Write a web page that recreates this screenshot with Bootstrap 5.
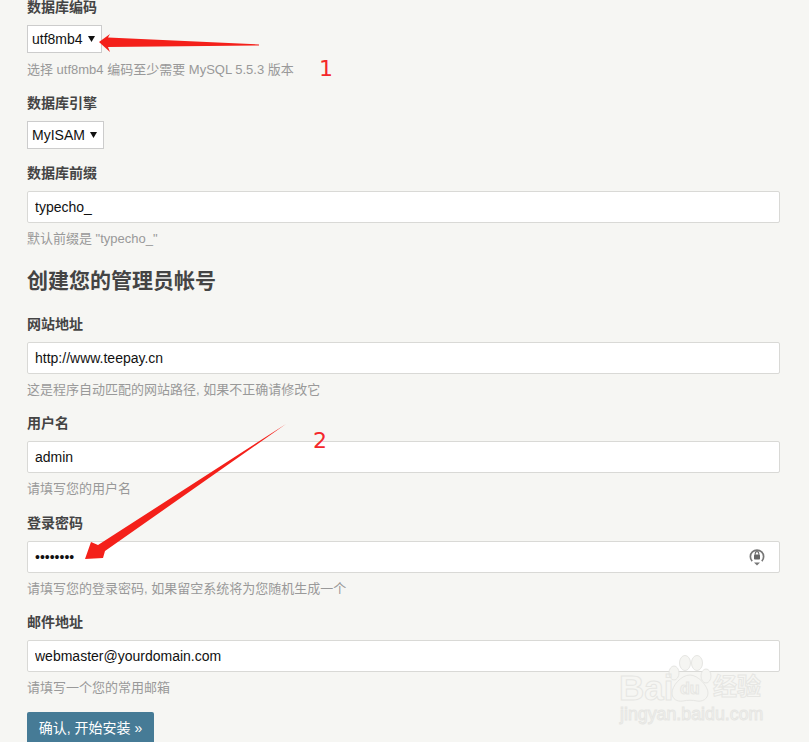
<!DOCTYPE html>
<html lang="zh-CN">
<head>
<meta charset="utf-8">
<title>Typecho 安装</title>
<link href="https://cdn.jsdelivr.net/npm/bootstrap@5.3.0/dist/css/bootstrap.min.css" rel="stylesheet">
<style>
html,body{height:742px;overflow:hidden}
body{background:#f6f6f3;color:#444;font-family:"Liberation Sans","Noto Sans CJK SC",sans-serif;font-size:14px;position:relative}
.install-form{padding:0 29px 0 27px;width:809px}
.fld{margin-bottom:14px}
.fld-nohint{margin-bottom:15px}
.fld-roomy{margin-bottom:15px}
.fld-label{display:block;font-weight:700;font-size:14px;line-height:18px;margin-bottom:9px;color:#444}
.fld-first .fld-label{line-height:15px;margin-bottom:10px}
.fld-hint{font-size:13px;line-height:20px;color:#999;margin:6px 0 0}
.fld-hint-sel{margin-top:7px}
.fld-input.form-control{height:32px;padding:0 7px;font-size:14px;line-height:30px;color:#111;border:1px solid #d9d9d6;border-radius:2px;background:#fff;box-shadow:none}
.fld-select.form-select{display:block;height:28px;padding:0 17px 0 4px;font-size:14px;line-height:26px;color:#111;border:1px solid #ccc;border-radius:0;background-color:#fff;background-position:right 6px center;background-size:7px 6px;--bs-form-select-bg-img:url("data:image/svg+xml,%3csvg xmlns='http://www.w3.org/2000/svg' viewBox='0 0 7 6'%3e%3cpath d='M0 0h7L3.500 6z' fill='%23111'/%3e%3c/svg%3e")}
.sel-a.form-select{width:75px}
.sel-b.form-select{width:77px}
.sec-title{font-size:21px;font-weight:700;line-height:30px;color:#444;margin:17px 0 19px}
.go-btn.btn{display:block;background:#467b96;border:0;border-radius:2px;color:#fff;font-size:14px;line-height:20px;padding:6px 0;width:127px;height:32px}
.pw-wrap{position:relative}
.pw-ico{position:absolute;right:15px;top:7px;width:16px;height:18px}
.overlay-art{position:absolute;left:0;top:0;width:809px;height:742px;pointer-events:none}
.mark-num{position:absolute;color:#f4272a;font-family:"DejaVu Sans",sans-serif;font-size:22px;line-height:24px}
.num-one{left:319px;top:57px}
.num-two{left:313px;top:429px}
.wm{position:absolute;color:transparent;-webkit-text-stroke:1px #e6e6e3;font-family:"Liberation Sans","Noto Sans CJK SC",sans-serif;white-space:nowrap;line-height:1}
.wm-bai{left:619px;top:670px;font-size:35px;font-weight:700}
.wm-du{left:680px;top:681px;font-size:16px;font-weight:700}
.wm-jy{left:713px;top:675px;font-size:24px;font-weight:700}
.wm-url{left:620px;top:706px;font-size:17.800px}
</style>
</head>
<body>
<form class="install-form">
  <div class="fld fld-first">
    <label class="fld-label">数据库编码</label>
    <select class="form-select fld-select sel-a"><option>utf8mb4</option></select>
    <p class="fld-hint fld-hint-sel">选择 utf8mb4 编码至少需要 MySQL 5.5.3 版本</p>
  </div>
  <div class="fld fld-nohint">
    <label class="fld-label">数据库引擎</label>
    <select class="form-select fld-select sel-b"><option>MyISAM</option></select>
  </div>
  <div class="fld">
    <label class="fld-label">数据库前缀</label>
    <input class="form-control fld-input" value="typecho_">
    <p class="fld-hint">默认前缀是 "typecho_"</p>
  </div>
  <h3 class="sec-title">创建您的管理员帐号</h3>
  <div class="fld">
    <label class="fld-label">网站地址</label>
    <input class="form-control fld-input" value="http://www.teepay.cn">
    <p class="fld-hint">这是程序自动匹配的网站路径, 如果不正确请修改它</p>
  </div>
  <div class="fld fld-roomy">
    <label class="fld-label">用户名</label>
    <input class="form-control fld-input" value="admin">
    <p class="fld-hint">请填写您的用户名</p>
  </div>
  <div class="fld">
    <label class="fld-label">登录密码</label>
    <div class="pw-wrap">
      <input class="form-control fld-input" type="password" value="12345678">
      <svg class="pw-ico" viewBox="0 0 16 18" aria-hidden="true">
        <path d="M3.2 13.2A6.600 6.600 0 1 1 12.800 13.200" fill="none" stroke="#777" stroke-width="1.700"/>
        <path d="M5 14.500l3 3 3-3z" fill="#777"/>
        <rect x="5" y="6.600" width="6" height="5" rx=".8" fill="#666"/>
        <path d="M6.200 6.800V5.400a1.800 1.800 0 0 1 3.600 0v1.400" fill="none" stroke="#666" stroke-width="1.100"/>
      </svg>
    </div>
    <p class="fld-hint">请填写您的登录密码, 如果留空系统将为您随机生成一个</p>
  </div>
  <div class="fld">
    <label class="fld-label">邮件地址</label>
    <input class="form-control fld-input" value="webmaster@yourdomain.com">
    <p class="fld-hint">请填写一个您的常用邮箱</p>
  </div>
  <button type="button" class="btn go-btn">确认, 开始安装 »</button>
</form>

<svg class="overlay-art" viewBox="0 0 809 742" aria-hidden="true">
  <polygon points="99,42 110,34 108,37.500 259,44.500 259,45.500 108,47 110,52" fill="#f4201a"/>
  <polygon points="85,559 91,542 98,545 286,424 105,551 103,558" fill="#f4201a"/>
  <g fill="#f5f5f2" stroke="#e6e6e3" stroke-width="1">
    <ellipse cx="674" cy="673" rx="5" ry="7"/>
    <ellipse cx="685" cy="663" rx="5.500" ry="7.500"/>
    <ellipse cx="697" cy="663" rx="5.500" ry="7.500"/>
    <ellipse cx="706" cy="676" rx="5" ry="7"/>
    <path d="M690 675c8 0 18 11 18 18 0 6-6 9-11 8-4-1-10-1-14 0-6 1-11-2-11-8 0-7 9-18 18-18z"/>
  </g>
</svg>
<span class="wm wm-bai">Bai</span>
<span class="wm wm-du">du</span>
<span class="wm wm-jy">经验</span>
<span class="wm wm-url">jingyan.baidu.com</span>
<span class="mark-num num-one">1</span>
<span class="mark-num num-two">2</span>
<script src="https://cdn.jsdelivr.net/npm/bootstrap@5.3.0/dist/js/bootstrap.bundle.min.js"></script>
</body>
</html>
